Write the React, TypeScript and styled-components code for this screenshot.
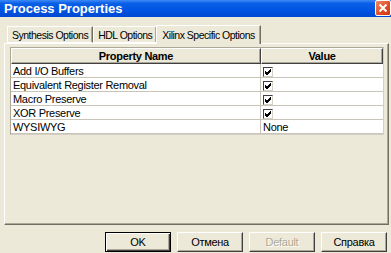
import React from "react";
import styled, { createGlobalStyle } from "styled-components";

const GlobalStyle = createGlobalStyle`
  html, body {
    margin: 0;
    padding: 0;
    background: #ece9d8;
  }
  * {
    box-sizing: border-box;
  }
`;

const StyledWindow = styled.div`
  width: 391px;
  height: 253px;
  background: #ece9d8;
  display: flex;
  flex-direction: column;
  font-family: "Liberation Sans", Arial, sans-serif;
  font-size: 11px;
  letter-spacing: -0.3px;
  color: #000;
  overflow: hidden;
`;

const StyledTitleBar = styled.div`
  height: 17px;
  display: flex;
  align-items: center;
  justify-content: space-between;
  padding-left: 4px;
  background: linear-gradient(to bottom, #3d8af7 0%, #0a5fe6 20%, #0054e3 60%, #0048d0 100%);
  color: #fff;
  font-weight: bold;
  font-size: 13px;
  letter-spacing: 0;
`;

const StyledClose = styled.div`
  width: 16px;
  height: 16px;
  margin-top: -1px;
  border: 1px solid #fff;
  border-radius: 2px;
  background: linear-gradient(to bottom right, #f08a6a, #e04a20 60%, #c83a10);
  display: flex;
  align-items: center;
  justify-content: center;
`;

const StyledBody = styled.div`
  flex: 1;
  display: flex;
  flex-direction: column;
  padding: 8px 2px 0 4px;
`;

const StyledTabs = styled.div`
  display: flex;
  align-items: flex-end;
  padding-left: 3px;
  height: 18px;
  position: relative;
  z-index: 1;
`;

const StyledTab = styled.div<{ $active?: boolean }>`
  height: ${(p) => (p.$active ? "19px" : "17px")};
  padding: 0 ${(p) => (p.$active ? "5px" : "4px")};
  margin: ${(p) => (p.$active ? "0 -1px -1px -1px" : "0")};
  display: flex;
  align-items: center;
  background: #ece9d8;
  border-top: 1px solid #fff;
  border-left: 1px solid #fff;
  border-right: 1px solid #716f64;
  border-bottom: ${(p) => (p.$active ? "none" : "1px solid #fff")};
  box-shadow: inset -1px 0 0 #aca899;
  white-space: nowrap;
  font-size: 10.5px;
  letter-spacing: -0.5px;
`;

const StyledPanel = styled.div`
  height: 182px;
  border-top: 1px solid #fff;
  border-left: 1px solid #fff;
  border-right: 1px solid #716f64;
  border-bottom: 1px solid #716f64;
  box-shadow: inset -1px -1px 0 #aca899;
  padding: 3px 0 0 5px;
`;

const StyledTable = styled.div`
  width: 374px;
  display: grid;
  grid-template-columns: 250px 1fr;
  background: #fff;
  border-top: 1px solid #aca899;
  border-left: 1px solid #aca899;
  border-right: 1px solid #d4d0c8;
  border-bottom: 1px solid #d4d0c8;
`;

const StyledHeaderCell = styled.div`
  height: 16px;
  display: flex;
  align-items: center;
  justify-content: center;
  font-weight: bold;
  background: #ece9d8;
  border-top: 1px solid #fff;
  border-left: 1px solid #fff;
  border-right: 1px solid #404040;
  border-bottom: 1px solid #404040;
  box-shadow: inset -1px -1px 0 #aca899;
`;

const StyledCell = styled.div<{ $first?: boolean }>`
  height: 14px;
  display: flex;
  align-items: center;
  padding-left: 2px;
  padding-top: 1px;
  border-bottom: 1px solid #c8c5b8;
  border-right: ${(p) => (p.$first ? "1px solid #c8c5b8" : "none")};
  white-space: nowrap;
`;

const StyledCheck = styled.div`
  width: 10px;
  height: 10px;
  margin-top: 2px;
  background: #fff;
  border-top: 1px solid #404040;
  border-left: 1px solid #404040;
  border-right: 1px solid #d4d0c8;
  border-bottom: 1px solid #d4d0c8;
  display: flex;
  align-items: center;
  justify-content: center;
`;

const StyledButtons = styled.div`
  display: flex;
  justify-content: flex-end;
  gap: 6px;
  padding-top: 7px;
  padding-right: 2px;
`;

const StyledButton = styled.div<{ $default?: boolean; $disabled?: boolean }>`
  width: 66px;
  height: 20px;
  display: flex;
  align-items: center;
  justify-content: center;
  background: #ece9d8;
  color: ${(p) => (p.$disabled ? "#aca899" : "#000")};
  text-shadow: ${(p) => (p.$disabled ? "1px 1px 0 #fff" : "none")};
  border: 1px solid;
  border-color: ${(p) => (p.$default ? "#000" : "#fff #404040 #404040 #fff")};
  box-shadow: ${(p) =>
    p.$default
      ? "inset 1px 1px 0 #fff, inset -1px -1px 0 #404040, inset -2px -2px 0 #aca899"
      : "inset -1px -1px 0 #aca899"};
`;

const CheckMark: React.FC = () => (
  <svg width="8" height="8" viewBox="0 0 8 8">
    <path d="M1 3 L3 5 L7 1 M1 4 L3 6 L7 2 M1 5 L3 7 L7 3" stroke="#000" strokeWidth="1" fill="none" shapeRendering="crispEdges" />
  </svg>
);

interface Row {
  name: string;
  value: boolean | string;
}

const rows: Row[] = [
  { name: "Add I/O Buffers", value: true },
  { name: "Equivalent Register Removal", value: true },
  { name: "Macro Preserve", value: true },
  { name: "XOR Preserve", value: true },
  { name: "WYSIWYG", value: "None" },
];

const App: React.FC = () => {
  return (
    <StyledWindow>
      <GlobalStyle />
      <StyledTitleBar>
        <span>Process Properties</span>
        <StyledClose>
          <svg width="10" height="10" viewBox="0 0 10 10">
            <path d="M1.5 1.5 L8.5 8.5 M8.5 1.5 L1.5 8.5" stroke="#fff" strokeWidth="2" />
          </svg>
        </StyledClose>
      </StyledTitleBar>
      <StyledBody>
        <StyledTabs>
          <StyledTab>Synthesis Options</StyledTab>
          <StyledTab>HDL Options</StyledTab>
          <StyledTab $active>Xilinx Specific Options</StyledTab>
        </StyledTabs>
        <StyledPanel>
          <StyledTable>
            <StyledHeaderCell>Property Name</StyledHeaderCell>
            <StyledHeaderCell>Value</StyledHeaderCell>
            {rows.map((r) => (
              <React.Fragment key={r.name}>
                <StyledCell $first>{r.name}</StyledCell>
                <StyledCell>
                  {typeof r.value === "boolean" ? (
                    <StyledCheck>{r.value && <CheckMark />}</StyledCheck>
                  ) : (
                    r.value
                  )}
                </StyledCell>
              </React.Fragment>
            ))}
          </StyledTable>
        </StyledPanel>
        <StyledButtons>
          <StyledButton $default>OK</StyledButton>
          <StyledButton>Отмена</StyledButton>
          <StyledButton $disabled>Default</StyledButton>
          <StyledButton>Справка</StyledButton>
        </StyledButtons>
      </StyledBody>
    </StyledWindow>
  );
};

export default App;
